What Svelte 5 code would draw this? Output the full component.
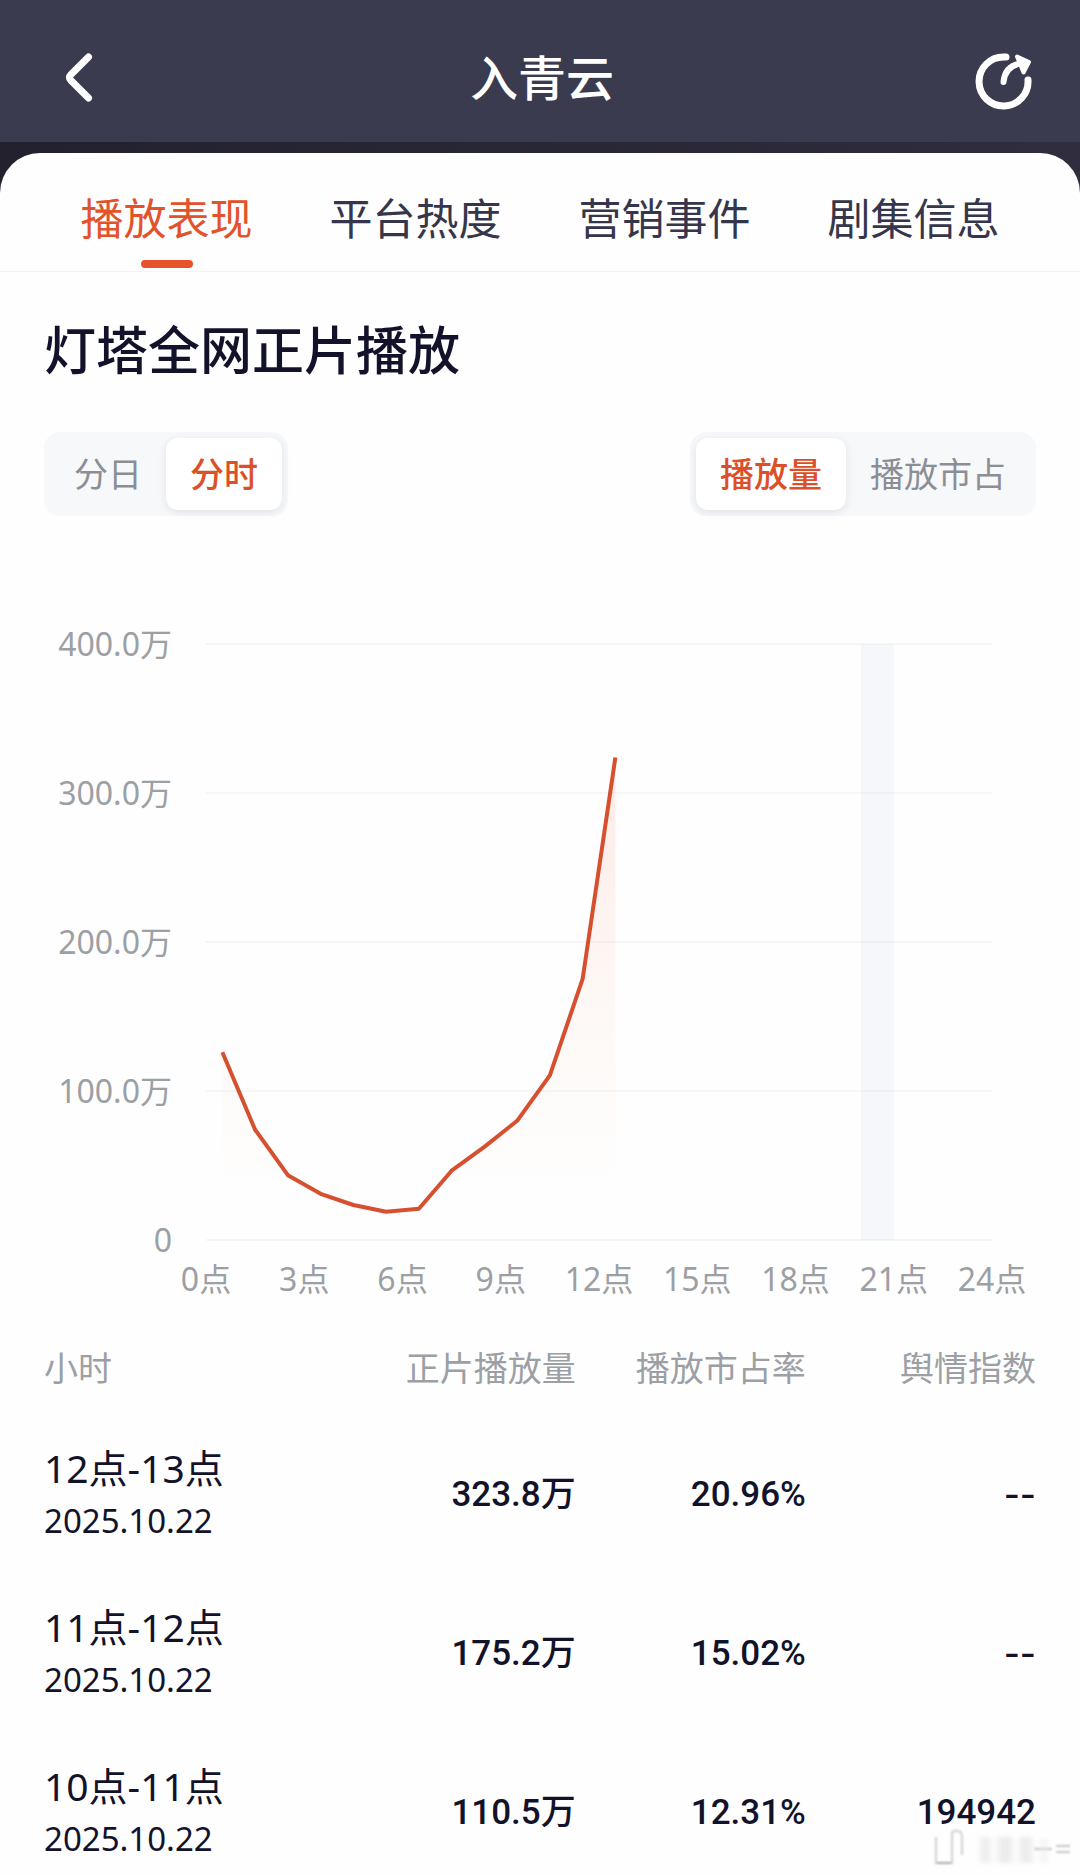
<script>
	const tabs = ['播放表现', '平台热度', '营销事件', '剧集信息'];
	const periods = ['分日', '分时'];
	const metrics = ['播放量', '播放市占'];

	let activeTab = $state('播放表现');
	let period = $state('分时');
	let metric = $state('播放量');

	// plays per hour, in units of 10k
	const plays = [126, 74, 43.5, 31, 23.5, 19, 21, 46.5, 62.5, 80, 110.5, 175.2, 323.8];
	const maxPlays = 400;
	const yTicks = [400, 300, 200, 100, 0];
	const xTicks = [0, 3, 6, 9, 12, 15, 18, 21, 24];

	let line = $derived(plays.map((v, i) => `${i + 0.5},${maxPlays - v}`).join(' '));
	let area = $derived(`0.5,${maxPlays} ${line} ${plays.length - 0.5},${maxPlays}`);

	const rows = [
		{ hour: '12点-13点', date: '2025.10.22', plays: '323.8万', share: '20.96%', index: '' },
		{ hour: '11点-12点', date: '2025.10.22', plays: '175.2万', share: '15.02%', index: '' },
		{ hour: '10点-11点', date: '2025.10.22', plays: '110.5万', share: '12.31%', index: '194942' }
	];
</script>

<div class="page">
	<header class="topbar">
		<button class="icon-btn" aria-label="返回">
			<svg width="56" height="56" viewBox="0 0 56 56" fill="none" stroke="currentColor" stroke-width="7" stroke-linecap="round" stroke-linejoin="round">
				<path d="M36.500 4L19 21.500Q16 24.500 19 27.500L36.500 45"/>
			</svg>
		</button>
		<h1>入青云</h1>
		<button class="icon-btn" aria-label="分享">
			<svg width="56" height="56" viewBox="0 0 56 56" fill="none" stroke="currentColor" stroke-width="7" stroke-linecap="round" stroke-linejoin="round">
				<path d="M30 4H27.500A24.500 24.500 0 1 0 52 27"/>
				<path stroke-width="6" d="M27.500 29Q29 12.500 45 10.500"/>
				<path d="M41 3.500L53 9L47.500 19.500Z" fill="currentColor" stroke-width="4"/>
			</svg>
		</button>
	</header>

	<main class="card">
		<nav class="tabs">
			{#each tabs as tab}
				<button class="tab" class:active={tab === activeTab} onclick={() => (activeTab = tab)}>{tab}</button>
			{/each}
		</nav>

		<section class="content">
			<h2>灯塔全网正片播放</h2>

			<div class="filters">
				<div class="segment">
					{#each periods as item}
						<button class:active={item === period} onclick={() => (period = item)}>{item}</button>
					{/each}
				</div>
				<div class="segment">
					{#each metrics as item}
						<button class:active={item === metric} onclick={() => (metric = item)}>{item}</button>
					{/each}
				</div>
			</div>

			<div class="chart">
				<div class="y-axis">
					{#each yTicks as tick}
						<span>{tick ? `${tick.toFixed(1)}万` : '0'}</span>
					{/each}
				</div>
				<div class="plot">
					<svg viewBox="0 0 24 {maxPlays}" preserveAspectRatio="none" aria-hidden="true">
						<defs>
							<linearGradient id="fade" x1="0" y1="0" x2="0" y2="1">
								<stop offset="0" stop-color="#f0593a" stop-opacity="0.12"/>
								<stop offset="0.9" stop-color="#f9a868" stop-opacity="0"/>
							</linearGradient>
						</defs>
						<rect x="20" y="0" width="1" height={maxPlays} fill="#f6f7fa"/>
						{#each yTicks as tick}
							<line class="grid" x1="0" x2="24" y1={maxPlays - tick} y2={maxPlays - tick}/>
						{/each}
						<polygon points={area} fill="url(#fade)"/>
						<polyline class="curve" points={line}/>
					</svg>
					<div class="x-axis">
						{#each xTicks as tick}
							<span>{tick}点</span>
						{/each}
					</div>
				</div>
			</div>

			<table>
				<thead>
					<tr>
						<th>小时</th>
						<th>正片播放量</th>
						<th>播放市占率</th>
						<th>舆情指数</th>
					</tr>
				</thead>
				<tbody>
					{#each rows as row}
						<tr>
							<td>
								<div class="hour">{row.hour}</div>
								<div class="date">{row.date}</div>
							</td>
							<td>{row.plays}</td>
							<td>{row.share}</td>
							<td class:empty={!row.index}>{row.index || '--'}</td>
						</tr>
					{/each}
				</tbody>
			</table>
		</section>
	</main>

	<svg class="watermark" width="150" height="50" viewBox="0 0 150 50" fill="none" aria-hidden="true">
		<defs>
			<filter id="soft" x="-20%" y="-20%" width="140%" height="140%">
				<feGaussianBlur stdDeviation="3 2"/>
			</filter>
			<filter id="edge" x="-20%" y="-20%" width="140%" height="140%">
				<feGaussianBlur stdDeviation="1"/>
			</filter>
		</defs>
		<g filter="url(#edge)">
			<path d="M6 12V38H22V8Q23 5 27 6Q32 6 32 12V30" stroke="#cfcfcf" stroke-width="2"/>
			<path d="M7 38H21" stroke="#a8a8a8" stroke-width="2"/>
			<path d="M104 24H122M126 21H140M126 27H140" stroke="#c4c4c4" stroke-width="2"/>
		</g>
		<g fill="#ebebeb" filter="url(#soft)">
			<rect x="51" y="12" width="9" height="26"/>
			<rect x="68" y="12" width="14" height="26"/>
			<rect x="90" y="12" width="12" height="26"/>
			<rect x="112" y="14" width="4" height="24"/>
		</g>
	</svg>
</div>

<style>
	:global(body) {
		margin: 0;
		background: #fefefe;
	}

	.page {
		position: relative;
		background: linear-gradient(90deg, #22212d, #2f2d3e);
		font-family: 'Noto Sans', 'Noto Sans CJK SC', sans-serif;
		color: #12132a;
	}

	button {
		border: none;
		padding: 0;
		background: none;
		font: inherit;
		color: inherit;
		cursor: pointer;
	}

	.topbar {
		display: flex;
		align-items: center;
		justify-content: space-between;
		height: 142px;
		padding: 0 48px 0 52px;
		box-sizing: border-box;
		background: #3a3b4f;
		color: #fff;
	}

	.icon-btn {
		height: 56px;
		margin-top: 20px;
	}

	.icon-btn svg {
		display: block;
		overflow: visible;
	}

	h1 {
		margin: 14px 0 0;
		font-size: 48px;
		line-height: 60px;
		font-weight: 500;
	}

	.card {
		margin-top: 11px;
		border-radius: 40px 40px 0 0;
		background: #fefefe;
	}

	.tabs {
		display: flex;
		padding: 36px 42px 3px;
		border-bottom: 1px solid #f3f3f5;
	}

	.tab {
		flex: 1;
		display: flex;
		flex-direction: column;
		align-items: center;
		gap: 11px;
		font-size: 43px;
		line-height: 60px;
		color: #35364b;
	}

	.tab::after {
		content: '';
		width: 52px;
		height: 8px;
		border-radius: 4px;
	}

	.tab.active {
		color: #e2522b;
	}

	.tab.active::after {
		background: #e8532b;
	}

	.content {
		padding: 48px 44px 0;
	}

	h2 {
		margin: 0;
		font-size: 52px;
		line-height: 60px;
		font-weight: 500;
	}

	.filters {
		display: flex;
		justify-content: space-between;
		margin-top: 52px;
	}

	.segment {
		display: flex;
		padding: 6px;
		border-radius: 16px;
		background: #f6f8fa;
	}

	.segment button {
		padding: 0 24px;
		border-radius: 12px;
		font-size: 34px;
		line-height: 72px;
		color: #8b8e94;
	}

	.segment button.active {
		background: #fff;
		box-shadow: 0 2px 8px rgba(30, 40, 60, 0.1);
		color: #dc5029;
		font-weight: 500;
	}

	.chart {
		display: flex;
		gap: 34px;
		margin-top: 128px;
		padding-right: 44px;
		font-size: 32px;
		line-height: 40px;
		color: #9c9fa4;
	}

	.y-axis {
		display: flex;
		flex-direction: column;
		justify-content: space-between;
		align-items: flex-end;
		width: 128px;
		height: 596px;
	}

	.y-axis span {
		display: flex;
		align-items: center;
		height: 0;
	}

	.plot {
		flex: 1;
	}

	.plot svg {
		display: block;
		width: 100%;
		height: 596px;
		overflow: visible;
	}

	.grid {
		stroke: #242a40;
		stroke-opacity: 0.04;
		stroke-width: 2px;
		vector-effect: non-scaling-stroke;
	}

	.curve {
		fill: none;
		stroke: #d6502f;
		stroke-width: 4px;
		stroke-linejoin: round;
		vector-effect: non-scaling-stroke;
	}

	.x-axis {
		display: flex;
		justify-content: space-between;
		margin-top: 19px;
	}

	.x-axis span {
		display: flex;
		justify-content: center;
		width: 0;
		white-space: nowrap;
	}

	table {
		width: 100%;
		margin-top: 22px;
		border-collapse: collapse;
		table-layout: fixed;
	}

	th,
	td {
		padding: 26px 0 27px;
		text-align: right;
		white-space: nowrap;
	}

	th {
		width: 23.2%;
		padding: 17px 0;
		font-size: 34px;
		line-height: 60px;
		font-weight: 400;
		color: #9c9fa4;
	}

	th:first-child {
		width: auto;
	}

	th:first-child,
	td:first-child {
		text-align: left;
	}

	td {
		font-family: Roboto, 'Noto Sans CJK SC', sans-serif;
		font-size: 35px;
		line-height: 53px;
		font-weight: 500;
	}

	td:first-child {
		font-family: 'Noto Sans', 'Noto Sans CJK SC', sans-serif;
		font-weight: 400;
	}

	tbody tr:last-child td {
		padding-bottom: 10px;
	}

	td.empty {
		font-family: Inter, sans-serif;
	}

	.hour {
		font-size: 39px;
	}

	.date {
		font-size: 33px;
	}

	.watermark {
		position: absolute;
		right: 0;
		bottom: 0;
	}
</style>
